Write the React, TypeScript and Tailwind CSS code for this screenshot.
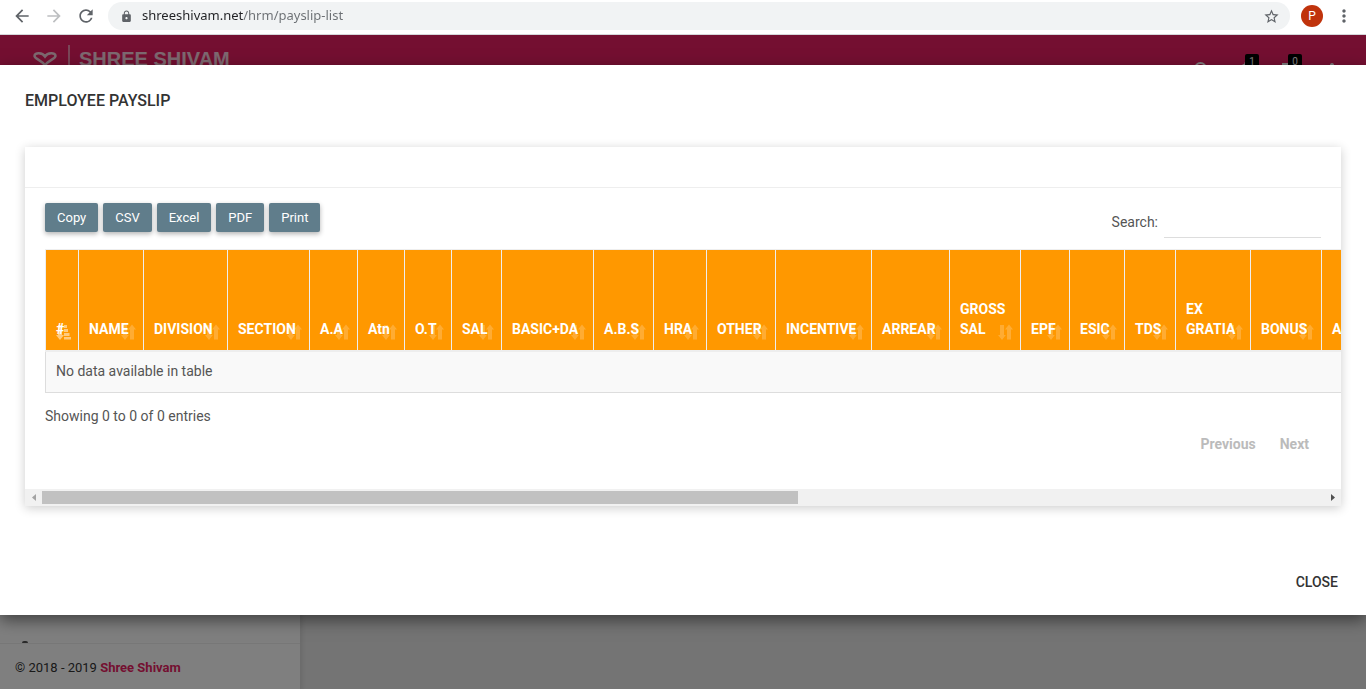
import type { ReactNode } from "react";
import {
  MdArrowBack,
  MdArrowForward,
  MdFlag,
  MdLock,
  MdMoreVert,
  MdNotifications,
  MdRefresh,
  MdSearch,
  MdStarBorder,
} from "react-icons/md";

const columns: { label: string; width: string }[] = [
  { label: "#", width: "w-[33px]" },
  { label: "NAME", width: "w-[65px]" },
  { label: "DIVISION", width: "w-[84px]" },
  { label: "SECTION", width: "w-[82px]" },
  { label: "A.A", width: "w-[48px]" },
  { label: "Atn", width: "w-[47px]" },
  { label: "O.T", width: "w-[47px]" },
  { label: "SAL", width: "w-[50px]" },
  { label: "BASIC+DA", width: "w-[92px]" },
  { label: "A.B.S", width: "w-[60px]" },
  { label: "HRA", width: "w-[53px]" },
  { label: "OTHER", width: "w-[69px]" },
  { label: "INCENTIVE", width: "w-[96px]" },
  { label: "ARREAR", width: "w-[78px]" },
  { label: "GROSS SAL", width: "w-[71px]" },
  { label: "EPF", width: "w-[49px]" },
  { label: "ESIC", width: "w-[55px]" },
  { label: "TDS", width: "w-[51px]" },
  { label: "EX GRATIA", width: "w-[75px]" },
  { label: "BONUS", width: "w-[71px]" },
  { label: "A", width: "w-[89px]" },
];

const exportButtons = ["Copy", "CSV", "Excel", "PDF", "Print"];

function SortIcon({ active }: { active: boolean }) {
  return active ? (
    <svg className="absolute right-[7px] bottom-[10px] h-4 w-[15px] opacity-50" viewBox="0 0 15 16" fill="#fff" aria-hidden="true">
      <path d="M2 1h4v10h2l-4 5-4-5h2z" />
      <path d="M8 1h3v3H8zM8 5h4v3H8zM8 9h5.500v3H8zM8 13h7v2.500H8z" />
    </svg>
  ) : (
    <svg className="absolute right-[7px] bottom-[10px] h-4 w-[15px] opacity-20" viewBox="0 0 15 16" fill="#fff" aria-hidden="true">
      <path d="M2 1h4v10h1.800L4 16 0 11h2z" />
      <path d="M9 15.500h4V5.500h2L11 .5l-4 5h2z" />
    </svg>
  );
}

function BrowserBar() {
  return (
    <div className="flex h-[35px] shrink-0 items-center border-b border-[#d5d7da] bg-white pb-0.5 text-[#5f6368]">
      <div className="flex items-center gap-3 pl-3">
        <button aria-label="Back"><MdArrowBack size={20} /></button>
        <button aria-label="Forward" className="text-[#bdbfc1]"><MdArrowForward size={20} /></button>
        <button aria-label="Reload"><MdRefresh size={20} /></button>
      </div>
      <div className="ml-3 flex h-7 flex-1 items-center rounded-full bg-[#f1f3f4] pr-2.5 pl-3">
        <MdLock size={13} />
        <input
          type="text"
          aria-label="Address"
          className="ml-[9px] flex-1 bg-[linear-gradient(90deg,#202124_101px,#6b6f73_101px)] bg-clip-text font-['Noto_Sans',sans-serif] text-[13px] text-transparent outline-none"
          defaultValue="shreeshivam.net/hrm/payslip-list"
        />
        <button aria-label="Bookmark"><MdStarBorder size={17} /></button>
      </div>
      <button aria-label="Profile" className="ml-[11px] size-[22px] rounded-full bg-[#c0330c] text-xs text-white">P</button>
      <button aria-label="Menu" className="mr-3 ml-[11px]"><MdMoreVert size={20} /></button>
    </div>
  );
}

function HeaderButton({ label, badge, children }: { label: string; badge?: string; children: ReactNode }) {
  return (
    <button aria-label={label} className="relative">
      {children}
      {badge && (
        <span className="absolute -top-[5px] left-[11px] h-4 w-3.5 rounded-xs bg-black text-center text-[10px] leading-4">
          {badge}
        </span>
      )}
    </button>
  );
}

function AppBackground() {
  return (
    <div className="flex min-h-0 flex-1 flex-col overflow-hidden bg-[#e9e9e9]">
      <header className="flex h-[70px] shrink-0 items-start justify-between bg-[#e91e63] text-white">
        <div className="flex pt-2.5 pl-8">
          <svg className="mt-1.5 h-4 w-[26px] opacity-80" viewBox="0 0 26 16" fill="none" stroke="currentColor" strokeWidth="2.500" aria-hidden="true">
            <path d="M13 5.500C10.500 1.500 2.500 1 2.500 5c0 3 7 4 10.500 9.500C16.500 9 23.500 8 23.500 5c0-4-8-3.500-10.500.5z" />
          </svg>
          <span className="ml-2.5 h-10 border-l-2 border-white/50" />
          <span className="pl-[9px] font-['Liberation_Sans',sans-serif] text-xl leading-7 font-bold text-white/80">
            SHREE SHIVAM
          </span>
        </div>
        <div className="flex gap-[19px] pt-6 pr-[22px]">
          <HeaderButton label="Search"><MdSearch size={24} /></HeaderButton>
          <HeaderButton label="Notifications" badge="1"><MdNotifications size={24} /></HeaderButton>
          <HeaderButton label="Tasks" badge="0"><MdFlag size={24} /></HeaderButton>
          <HeaderButton label="More"><MdMoreVert size={24} /></HeaderButton>
        </div>
      </header>
      <div className="flex min-h-0 flex-1">
        <aside className="flex w-[300px] flex-col bg-white shadow-[2px_2px_5px_rgba(0,0,0,0.1)]">
          <div className="mt-auto ml-[22px] h-0.5 w-1.5 rounded-t-sm bg-[#555]" />
          <footer className="border-t border-[#eee] px-[15px] pt-[15px] pb-3 text-[13px] leading-[18px] text-[#333]">
            © 2018 - 2019 <a href="#home" className="font-bold text-[#e91e63]">Shree Shivam</a>
          </footer>
        </aside>
      </div>
    </div>
  );
}

function PayslipTable() {
  return (
    <table className="w-[1365px] table-fixed border-separate border-spacing-0 text-sm leading-5">
      <colgroup>
        {columns.map((c) => (
          <col key={c.label} className={c.width} />
        ))}
      </colgroup>
      <thead>
        <tr className="h-[103px]">
          {columns.map((c, i) => (
            <th
              key={c.label}
              className="relative border-t border-b-2 border-l border-[#eee] bg-[#ff9800] bg-clip-padding px-2.5 pb-[11px] text-left align-bottom font-bold text-white"
            >
              {c.label}
              <SortIcon active={i === 0} />
            </th>
          ))}
        </tr>
      </thead>
      <tbody>
        <tr>
          <td colSpan={columns.length} className="border-b border-l border-[#ddd] bg-[#f9f9f9] px-2.5 pt-[9px] pb-[11px] text-[#555]">
            No data available in table
          </td>
        </tr>
      </tbody>
    </table>
  );
}

function ScrollBar() {
  return (
    <div className="flex h-[17px] items-center bg-[#f1f1f1]">
      <button aria-label="Scroll left" className="flex w-[17px] justify-center text-[#a3a3a3]">
        <svg className="h-[7px] w-1" viewBox="0 0 4 7" fill="currentColor"><path d="M4 0v7L0 3.500z" /></svg>
      </button>
      <div className="flex-1">
        <div className="h-[13px] w-[59%] bg-[#c1c1c1]" />
      </div>
      <button aria-label="Scroll right" className="flex w-[17px] justify-center text-[#505050]">
        <svg className="h-[7px] w-1" viewBox="0 0 4 7" fill="currentColor"><path d="M0 0v7l4-3.500z" /></svg>
      </button>
    </div>
  );
}

export default function App() {
  return (
    <div className="flex h-screen flex-col overflow-hidden font-[Roboto,sans-serif]">
      <BrowserBar />
      <div className="relative flex min-h-0 flex-1 flex-col">
        <AppBackground />
        <div className="absolute inset-0 bg-black/50 pt-[30px]">
          <div role="dialog" aria-labelledby="payslip-title" className="bg-white shadow-[0_5px_15px_rgba(0,0,0,0.5)]">
            <h4 id="payslip-title" className="px-[25px] pt-[26px] text-base leading-5 font-medium text-[#333]">
              EMPLOYEE PAYSLIP
            </h4>
            <div className="px-[25px] pt-9">
              <section className="overflow-hidden bg-white shadow-[0_2px_10px_rgba(0,0,0,0.2)]">
                <div className="h-[41px] border-b border-[#eee]" />
                <div className="px-5 pt-[15px] pb-[35px] text-sm leading-5 text-[#555]">
                  <div className="flex justify-between">
                    <div className="flex items-start gap-[5px]">
                      {exportButtons.map((b) => (
                        <button
                          key={b}
                          className="h-[29px] rounded-xs bg-[#607d8b] px-3 text-[13px] text-white shadow-[0_2px_5px_rgba(0,0,0,0.3)]"
                        >
                          {b}
                        </button>
                      ))}
                    </div>
                    <label className="flex items-start gap-1.5 pt-[5px] leading-7">
                      Search:
                      <input type="search" className="h-[30px] w-[157px] border-b border-[#ddd] outline-none" />
                    </label>
                  </div>
                  <div className="pt-[11px]">
                    <PayslipTable />
                  </div>
                  <p className="pt-[13px]">Showing 0 to 0 of 0 entries</p>
                  <nav aria-label="Pagination" className="flex justify-end gap-6 pt-2 pr-3 font-bold text-[#bbb]">
                    <button>Previous</button>
                    <button>Next</button>
                  </nav>
                </div>
                <ScrollBar />
              </section>
            </div>
            <div className="flex justify-end px-7 pt-[66px] pb-[23px]">
              <button className="text-sm leading-5 font-medium text-[#333]">CLOSE</button>
            </div>
          </div>
        </div>
      </div>
    </div>
  );
}
